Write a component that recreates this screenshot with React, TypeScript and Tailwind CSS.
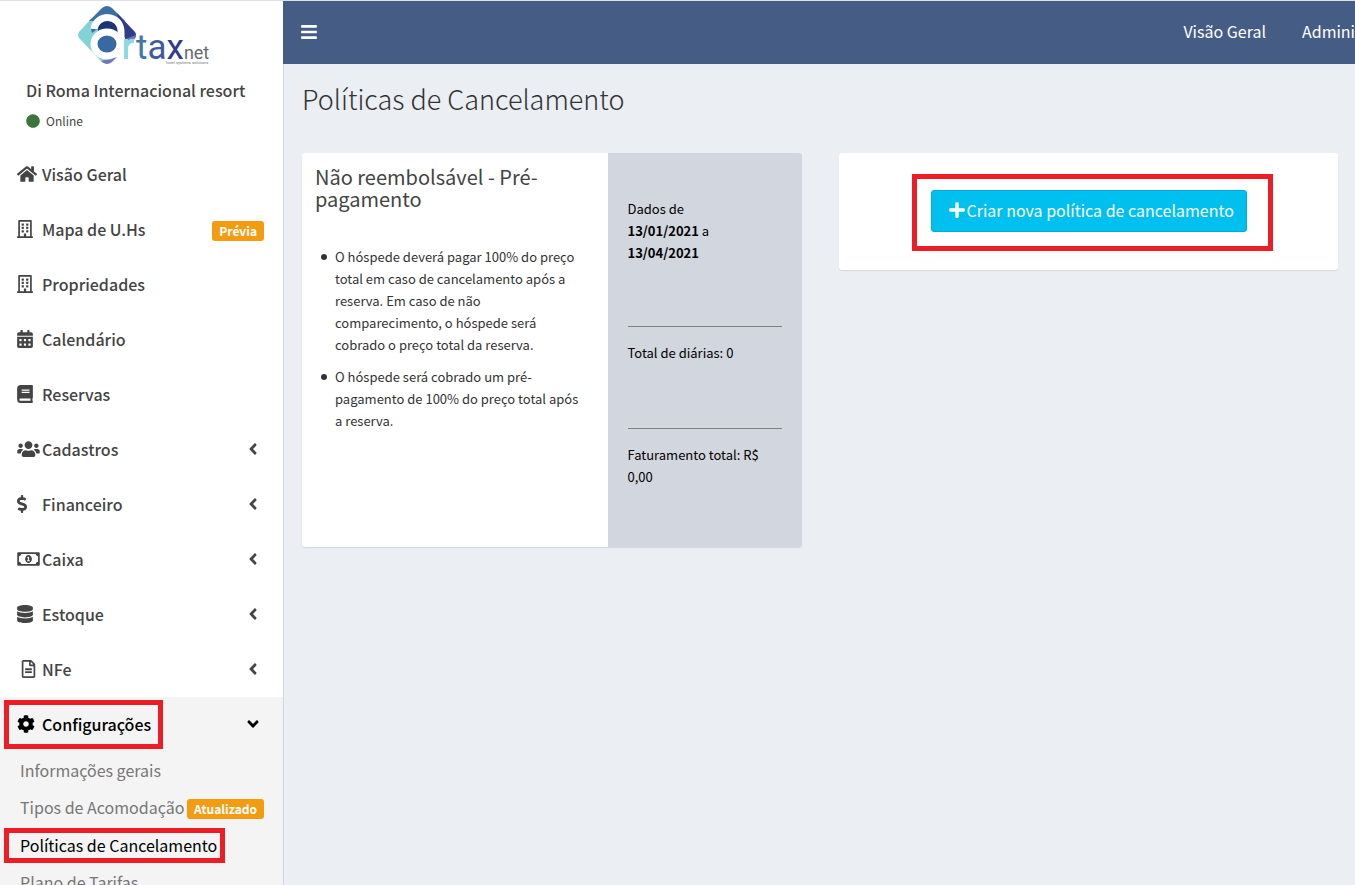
import type { ReactNode } from "react";
import {
  FaAngleDown,
  FaAngleLeft,
  FaBars,
  FaBook,
  FaCalendarAlt,
  FaCircle,
  FaCog,
  FaDatabase,
  FaDollarSign,
  FaHome,
  FaPlus,
  FaRegBuilding,
  FaRegFileAlt,
  FaRegMoneyBillAlt,
  FaUsers,
} from "react-icons/fa";

type Item = { label: string; icon: ReactNode; badge?: string; expandable?: boolean };

const items: Item[] = [
  { label: "Visão Geral", icon: <FaHome className="h-[18px] w-5" /> },
  { label: "Mapa de U.Hs", icon: <FaRegBuilding className="h-[18px] w-4" />, badge: "Prévia" },
  { label: "Propriedades", icon: <FaRegBuilding className="h-[18px] w-4" /> },
  { label: "Calendário", icon: <FaCalendarAlt className="h-[18px] w-4" /> },
  { label: "Reservas", icon: <FaBook className="h-[18px] w-4" /> },
  { label: "Cadastros", icon: <FaUsers className="h-[18px] w-[23px]" />, expandable: true },
  { label: "Financeiro", icon: <FaDollarSign className="h-[18px] w-[10px]" />, expandable: true },
  { label: "Caixa", icon: <FaRegMoneyBillAlt className="h-[18px] w-[23px]" />, expandable: true },
  { label: "Estoque", icon: <FaDatabase className="h-[18px] w-4" />, expandable: true },
  { label: "NFe", icon: <FaRegFileAlt className="h-[18px] w-[23px]" />, expandable: true },
];

const subItems = [
  { label: "Informações gerais" },
  { label: "Tipos de Acomodação", badge: "Atualizado" },
  { label: "Políticas de Cancelamento", current: true },
  { label: "Plano de Tarifas" },
];

function Logo() {
  return (
    <svg
      viewBox="0 0 140 64"
      className="h-16 w-[140px] overflow-visible"
      role="img"
      aria-label="Artaxnet"
      fontFamily="Roboto, 'Liberation Sans', sans-serif"
    >
      <path d="M4 31 Q2 34 4 37 L26 60 Q32 66 38 60 L46 48 V20 L16 18 Z" fill="#82d3d6" />
      <path d="M14 20 L27 7 Q32 3 37 7 L50 20 L44 30 L38 20 Z" fill="#3b70a6" />
      <path d="M42 12 L60 31 Q62 34 60 37 L53 43 L46 30 Z" fill="#2f3c8c" />
      <path d="M48 39 L61 34 Q61 37 58 40 L50 47 Z" fill="#7474bd" />
      <path d="M26 60 L42 56 L38 60 Q32 66 26 60 Z" fill="#7474bd" />
      <path d="M23 30 C22 16 43 16 43 29 V38 L34 33 Z" fill="#1d3479" />
      <path d="M16 28 H24 Q20 29 17 32 Z" fill="#3b70a6" />
      <ellipse cx="32" cy="43" rx="13" ry="12" fill="#3a68a3" stroke="#ffffff" strokeWidth="7" />
      <path
        d="M19 28 C21 13 45 12 46 30 V51 Q46 57 52 58"
        fill="none"
        stroke="#ffffff"
        strokeWidth="7"
      />
      <path d="M51 38 V58 M51 46 Q53 39 59 40" stroke="#8adbdd" strokeWidth="4" fill="none" />
      <text x="61" y="58" fontSize="35">
        <tspan fill="#4276ae">t</tspan>
        <tspan fill="#4059a0">a</tspan>
        <tspan fill="#303b8c">x</tspan>
        <tspan fontSize="18" fill="#666a70">
          net
        </tspan>
      </text>
      <text x="91" y="63" fontSize="4" fill="#77797d">
        hotel systems solutions
      </text>
    </svg>
  );
}

function Badge({ children }: { children: ReactNode }) {
  return (
    <span className="mt-1 rounded-[3px] bg-[#f39c12] px-[7px] text-[12px] leading-5 font-bold text-white">
      {children}
    </span>
  );
}

function Sidebar() {
  return (
    <aside className="flex w-[284px] shrink-0 flex-col border-r border-[#d2d6de] bg-white text-[#444]">
      <div className="flex h-16 shrink-0 pl-[75px]">
        <Logo />
      </div>
      <div className="flex h-[82px] shrink-0 flex-col gap-[9px] px-[26px] pt-[13px]">
        <p className="text-base leading-6 font-medium whitespace-nowrap">Di Roma Internacional resort</p>
        <p className="flex items-center gap-[6px] text-[12px] leading-5">
          <FaCircle className="size-[14px] text-[#3c763d]" />
          Online
        </p>
      </div>
      <nav className="text-base">
        <ul>
          {items.map((item) => (
            <li key={item.label}>
              <a href="#" className="flex h-[55px] items-center pr-[19px] pb-[2px] pl-[17px] font-medium">
                <span className="flex w-[25px] shrink-0 items-center">{item.icon}</span>
                <span className="grow">{item.label}</span>
                {item.badge && <Badge>{item.badge}</Badge>}
                {item.expandable && <FaAngleLeft className="mr-[2px] size-[18px]" />}
              </a>
            </li>
          ))}
          <li className="bg-[#f4f4f4] pb-4">
            <a
              href="#"
              className="relative flex h-[55px] items-center pr-[21px] pb-[2px] pl-[17px] font-medium text-black"
            >
              <span className="pointer-events-none absolute top-[3px] left-1 h-[49px] w-[159px] border-5 border-[#ee1c25]" />
              <span className="flex w-[25px] shrink-0 items-center">
                <FaCog className="size-[18px]" />
              </span>
              <span className="grow">Configurações</span>
              <FaAngleDown className="size-[18px]" />
            </a>
            <ul>
              {subItems.map((sub) => (
                <li key={sub.label}>
                  <a
                    href="#"
                    className={
                      "relative flex items-center justify-between pr-[19px] pb-[2px] pl-5 whitespace-nowrap " +
                      (sub.badge ? "h-[38px] " : "h-[37px] ") +
                      (sub.current ? "text-black" : "text-[#777]")
                    }
                  >
                    {sub.current && (
                      <span className="pointer-events-none absolute top-[1px] left-1 h-[35px] w-[221px] border-5 border-[#ee1c25]" />
                    )}
                    {sub.label}
                    {sub.badge && <Badge>{sub.badge}</Badge>}
                  </a>
                </li>
              ))}
            </ul>
          </li>
        </ul>
      </nav>
    </aside>
  );
}

const rules = [
  "O hóspede deverá pagar 100% do preço total em caso de cancelamento após a reserva. Em caso de não comparecimento, o hóspede será cobrado o preço total da reserva.",
  "O hóspede será cobrado um pré-pagamento de 100% do preço total após a reserva.",
];

function PolicyCard() {
  return (
    <section className="flex min-h-[394px] overflow-hidden rounded-[3px] bg-white shadow-[0_1px_1px_rgba(0,0,0,0.1)]">
      <div className="flex-1 px-[13px] pt-[13px] text-[#333]">
        <h2 className="text-[20px] leading-[22px] text-[#444]">Não reembolsável - Pré-pagamento</h2>
        <ul className="mt-9 space-y-[10px] pr-3 pl-[6px] text-[13px] leading-[22px]">
          {rules.map((rule) => (
            <li key={rule} className="flex gap-2">
              <span className="mt-2 size-[6px] shrink-0 rounded-full bg-[#333]" />
              <span>{rule}</span>
            </li>
          ))}
        </ul>
      </div>
      <div className="w-[194px] shrink-0 bg-[#d2d6de] px-5 pt-[45px] text-[13px] leading-[22px] text-black">
        <p className="h-[129px] border-b border-[#808080]">
          Dados de
          <br />
          <strong>13/01/2021</strong> a
          <br />
          <strong>13/04/2021</strong>
        </p>
        <p className="h-[102px] border-b border-[#808080] pt-[15px]">Total de diárias: 0</p>
        <p className="pt-[15px]">Faturamento total: R$ 0,00</p>
      </div>
    </section>
  );
}

export default function App() {
  return (
    <div className="h-screen overflow-hidden border-t border-[#e0e0e0] bg-[#ebeef3] font-['Noto_Sans_CJK_SC',sans-serif]">
      <div className="flex h-full">
        <Sidebar />
        <div className="flex min-w-0 grow flex-col">
          <header className="relative z-10 -ml-px flex h-[63px] shrink-0 items-center justify-between bg-[#455d84] pb-[2px] pl-[17px] text-base text-white">
            <button type="button" aria-label="Alternar menu">
              <FaBars className="size-[18px]" />
            </button>
            <nav className="flex gap-9 pb-[2px] whitespace-nowrap">
              <a href="#">Visão Geral</a>
              <a href="#" className="w-[53px] overflow-hidden">
                Administração
              </a>
            </nav>
          </header>
          <main className="pr-[17px] pl-[18px]">
            <h1 className="pt-[15px] text-[27px] leading-10 font-light text-[#333]">Políticas de Cancelamento</h1>
            <div className="mt-[34px] grid grid-cols-2 items-start gap-[37px]">
              <PolicyCard />
              <section className="flex justify-center rounded-[3px] bg-white px-4 pt-[21px] pb-[19px] shadow-[0_1px_1px_rgba(0,0,0,0.1)]">
                <div className="ml-2 border-5 border-[#ee1c25] pt-[11px] pr-[21px] pb-[14px] pl-[14px]">
                  <button
                    type="button"
                    className="flex h-[42px] items-center rounded-[3px] border border-[#00acd6] bg-[#00c0ef] pr-3 pb-[2px] pl-4 text-base whitespace-nowrap text-white"
                  >
                    <FaPlus className="mr-[1px] size-[18px]" />
                    Criar nova política de cancelamento
                  </button>
                </div>
              </section>
            </div>
          </main>
        </div>
      </div>
    </div>
  );
}
